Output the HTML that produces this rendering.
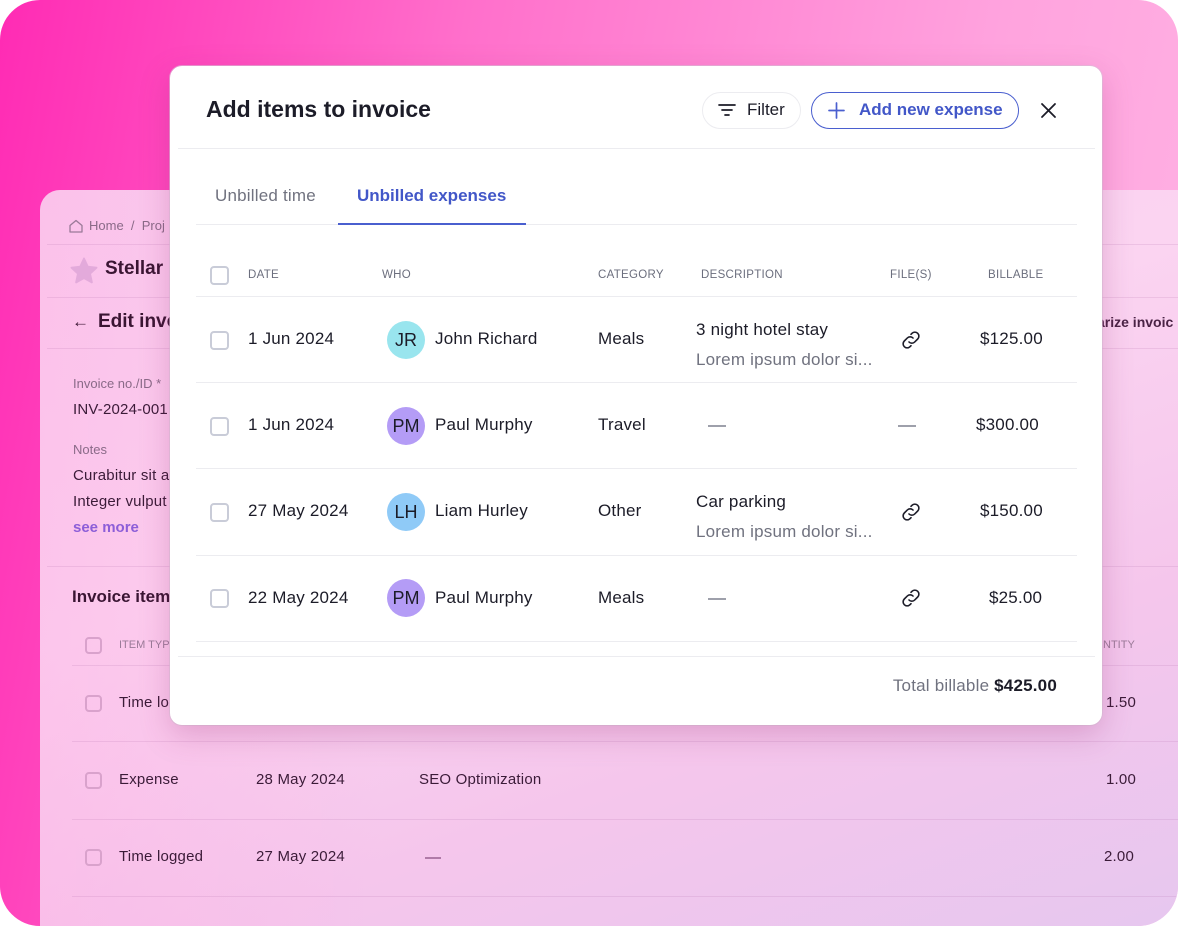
<!DOCTYPE html>
<html><head><meta charset="utf-8"><style>
*{box-sizing:border-box;margin:0;padding:0}
body{width:1178px;height:926px;background:#fff;font-family:"Liberation Sans",sans-serif;overflow:hidden;position:relative}
.frame{position:absolute;left:0;top:0;width:1178px;height:926px;border-radius:40px;overflow:hidden;background:linear-gradient(100deg,#ff2bb4 0%,#ff6fcb 35%,#ffa3de 75%,#ffb4e4 100%)}
.card{position:absolute;left:40px;top:190px;width:1140px;height:740px;border-radius:20px 0 0 0;background:linear-gradient(160deg,#f9cdef 0%,#fbd4f1 40%,#f5c6ec 70%,#e6c7ef 100%)}
.card2{position:absolute;inset:0;border-radius:20px 0 0 0;background:linear-gradient(90deg,rgba(255,170,225,.35),rgba(255,255,255,0) 30%)}
.t{position:absolute;white-space:nowrap;color:#3b1b38}
.hl{position:absolute;height:1px;background:rgba(180,110,170,.18)}
.cb{position:absolute;width:17px;height:17px;border:2px solid #d9a2cc;border-radius:4px}
.modal{position:absolute;left:170px;top:66px;width:932px;height:659px;background:#fff;border-radius:12px;box-shadow:0 10px 30px rgba(150,40,110,.25),0 0 0 1px rgba(220,200,220,.6)}
.m{position:absolute;white-space:nowrap;color:#1c1c28}
.ml{position:absolute;height:1px;background:#ececf0}
.mcb{position:absolute;width:19px;height:19px;border:2px solid #c9ccd8;border-radius:4px;left:40px}
.av{position:absolute;left:217px;width:38px;height:38px;border-radius:50%;font-size:18px;color:#1c1c28;display:flex;align-items:center;justify-content:center}
.hd{position:absolute;top:203px;font-size:11.5px;color:#6b6e7d;letter-spacing:.3px}
.gray{color:#70727f}
.dash{position:absolute;width:18px;height:1.5px;background:#9ea0ab}
.r{letter-spacing:.2px}
</style></head><body>
<div class="frame">
<div class="card"><div class="card2"></div></div>
<svg style="position:absolute;left:68px;top:218px" width="16" height="16" viewBox="0 0 16 16"><path d="M2 7.5L8 2.5l6 5V14H2z" fill="none" stroke="#9a7a98" stroke-width="1.3" stroke-linejoin="round"/></svg>
<div class="t" style="left:89px;top:218px;font-size:13px;color:#8a6a88">Home &nbsp;/ &nbsp;Proj</div>
<div class="hl" style="left:47px;top:244px;width:1131px"></div>
<svg style="position:absolute;left:68px;top:256px" width="32" height="30" viewBox="0 0 24 24"><path d="M12 2l3 6.5 7 .8-5.2 4.8 1.5 7L12 17.6 5.7 21.1l1.5-7L2 9.3l7-.8z" fill="#e3aadb" stroke="#e3aadb" stroke-linejoin="round" stroke-width="1.5"/></svg>
<div class="t" style="left:105px;top:258px;font-size:19px;font-weight:bold;color:#3a1533">Stellar</div>
<div class="hl" style="left:47px;top:297px;width:1131px"></div>
<div class="t" style="left:72px;top:312px;font-size:17px;color:#3a1533">←</div>
<div class="t" style="left:98px;top:311px;font-size:19px;font-weight:bold;color:#3a1533">Edit invo</div>
<div class="t" style="left:1097px;top:314px;font-size:14px;font-weight:bold;color:#4a2345">arize invoic</div>
<div class="hl" style="left:47px;top:348px;width:1131px"></div>
<div class="t" style="left:73px;top:376px;font-size:13px;color:#8a6a88">Invoice no./ID *</div>
<div class="t r" style="left:73px;top:401px;font-size:15px">INV-2024-001</div>
<div class="t" style="left:73px;top:442px;font-size:13px;color:#8a6a88">Notes</div>
<div class="t r" style="left:73px;top:467px;font-size:15px">Curabitur sit a</div>
<div class="t r" style="left:73px;top:493px;font-size:15px">Integer vulput</div>
<div class="t" style="left:73px;top:519px;font-size:15px;font-weight:bold;color:#8d5ed8">see more</div>
<div class="hl" style="left:47px;top:566px;width:1131px"></div>
<div class="t" style="left:72px;top:587px;font-size:17px;font-weight:bold;color:#3a1533">Invoice item</div>
<div class="cb" style="left:85px;top:637px"></div>
<div class="t" style="left:119px;top:639px;font-size:11px;color:#9a7a98">ITEM TYPE</div>
<div class="t" style="left:1103px;top:639px;font-size:11px;color:#9a7a98">NTITY</div>
<div class="hl" style="left:72px;top:665px;width:1106px"></div>
<div class="cb" style="left:85px;top:695px"></div>
<div class="t r" style="left:119px;top:694px;font-size:15px">Time lo</div>
<div class="t r" style="left:1106px;top:694px;font-size:15px">1.50</div>
<div class="hl" style="left:72px;top:741px;width:1106px"></div>
<div class="cb" style="left:85px;top:772px"></div>
<div class="t r" style="left:119px;top:771px;font-size:15px">Expense</div>
<div class="t r" style="left:256px;top:771px;font-size:15px">28 May 2024</div>
<div class="t r" style="left:419px;top:771px;font-size:15px">SEO Optimization</div>
<div class="t r" style="left:1106px;top:771px;font-size:15px">1.00</div>
<div class="hl" style="left:72px;top:819px;width:1106px"></div>
<div class="cb" style="left:85px;top:849px"></div>
<div class="t r" style="left:119px;top:848px;font-size:15px">Time logged</div>
<div class="t r" style="left:256px;top:848px;font-size:15px">27 May 2024</div>
<div style="position:absolute;left:425px;top:857px;width:16px;height:1.5px;background:#b07aa8"></div>
<div class="t r" style="left:1104px;top:848px;font-size:15px">2.00</div>
<div class="hl" style="left:72px;top:896px;width:1106px"></div>

<div class="modal">
<div class="m" style="left:36px;top:30px;font-size:23px;font-weight:bold">Add items to invoice</div>
<div style="position:absolute;left:532px;top:26px;width:99px;height:37px;border:1px solid #ececf0;border-radius:19px"></div>
<svg style="position:absolute;left:548px;top:36px" width="18" height="16" viewBox="0 0 18 16"><path d="M1 3h16M4 8h10M7 13h4" stroke="#1c1c28" stroke-width="1.7" stroke-linecap="round"/></svg>
<div class="m" style="left:577px;top:34px;font-size:17px">Filter</div>
<div style="position:absolute;left:641px;top:26px;width:208px;height:37px;border:1.5px solid #4a5fcf;border-radius:19px"></div>
<svg style="position:absolute;left:657px;top:35px" width="19" height="19" viewBox="0 0 19 19"><path d="M9.5 2v15M2 9.5h15" stroke="#4a5fcf" stroke-width="1.7" stroke-linecap="round"/></svg>
<div class="m" style="left:689px;top:34px;font-size:17px;font-weight:bold;color:#4257c8">Add new expense</div>
<svg style="position:absolute;left:870px;top:36px" width="17" height="17" viewBox="0 0 17 17"><path d="M2 2l13 13M15 2L2 15" stroke="#1c1c28" stroke-width="1.8" stroke-linecap="round"/></svg>
<div class="ml" style="left:8px;top:82px;width:917px"></div>
<div class="m gray r" style="left:45px;top:120px;font-size:17px">Unbilled time</div>
<div class="m" style="left:187px;top:120px;font-size:17px;font-weight:bold;color:#4257c8">Unbilled expenses</div>
<div class="ml" style="left:26px;top:158px;width:881px"></div>
<div style="position:absolute;left:168px;top:157px;width:188px;height:2px;background:#4a5fcf"></div>
<div class="mcb" style="top:200px"></div>
<div class="hd" style="left:78px">DATE</div>
<div class="hd" style="left:212px">WHO</div>
<div class="hd" style="left:428px">CATEGORY</div>
<div class="hd" style="left:531px">DESCRIPTION</div>
<div class="hd" style="left:720px">FILE(S)</div>
<div class="hd" style="left:818px">BILLABLE</div>
<div class="ml" style="left:26px;top:230px;width:881px"></div>

<div class="mcb" style="top:265px"></div>
<div class="m r" style="left:78px;top:263px;font-size:17px">1 Jun 2024</div>
<div class="av" style="top:255px;background:#99e5ee">JR</div>
<div class="m r" style="left:265px;top:263px;font-size:17px">John Richard</div>
<div class="m r" style="left:428px;top:263px;font-size:17px">Meals</div>
<div class="m r" style="left:526px;top:254px;font-size:17px">3 night hotel stay</div>
<div class="m gray r" style="left:526px;top:284px;font-size:17px">Lorem ipsum dolor si...</div>
<svg style="position:absolute;left:729px;top:262px" width="24" height="24" viewBox="0 0 24 24"><path d="M10 14a4 4 0 0 0 5.7 0l3-3a4 4 0 0 0-5.7-5.7l-1 1M14 10a4 4 0 0 0-5.7 0l-3 3a4 4 0 0 0 5.7 5.7l1-1" fill="none" stroke="#1c1c28" stroke-width="1.6" stroke-linecap="round"/></svg>
<div class="m r" style="left:810px;top:263px;font-size:17px">$125.00</div>
<div class="ml" style="left:26px;top:316px;width:881px"></div>

<div class="mcb" style="top:351px"></div>
<div class="m r" style="left:78px;top:349px;font-size:17px">1 Jun 2024</div>
<div class="av" style="top:341px;background:#b49cf6">PM</div>
<div class="m r" style="left:265px;top:349px;font-size:17px">Paul Murphy</div>
<div class="m r" style="left:428px;top:349px;font-size:17px">Travel</div>
<div class="dash" style="left:538px;top:359px"></div>
<div class="dash" style="left:728px;top:359px"></div>
<div class="m r" style="left:806px;top:349px;font-size:17px">$300.00</div>
<div class="ml" style="left:26px;top:402px;width:881px"></div>

<div class="mcb" style="top:437px"></div>
<div class="m r" style="left:78px;top:435px;font-size:17px">27 May 2024</div>
<div class="av" style="top:427px;background:#8fcaf7">LH</div>
<div class="m r" style="left:265px;top:435px;font-size:17px">Liam Hurley</div>
<div class="m r" style="left:428px;top:435px;font-size:17px">Other</div>
<div class="m r" style="left:526px;top:426px;font-size:17px">Car parking</div>
<div class="m gray r" style="left:526px;top:456px;font-size:17px">Lorem ipsum dolor si...</div>
<svg style="position:absolute;left:729px;top:434px" width="24" height="24" viewBox="0 0 24 24"><path d="M10 14a4 4 0 0 0 5.7 0l3-3a4 4 0 0 0-5.7-5.7l-1 1M14 10a4 4 0 0 0-5.7 0l-3 3a4 4 0 0 0 5.7 5.7l1-1" fill="none" stroke="#1c1c28" stroke-width="1.6" stroke-linecap="round"/></svg>
<div class="m r" style="left:810px;top:435px;font-size:17px">$150.00</div>
<div class="ml" style="left:26px;top:489px;width:881px"></div>

<div class="mcb" style="top:523px"></div>
<div class="m r" style="left:78px;top:522px;font-size:17px">22 May 2024</div>
<div class="av" style="top:513px;background:#b49cf6">PM</div>
<div class="m r" style="left:265px;top:522px;font-size:17px">Paul Murphy</div>
<div class="m r" style="left:428px;top:522px;font-size:17px">Meals</div>
<div class="dash" style="left:538px;top:532px"></div>
<svg style="position:absolute;left:729px;top:520px" width="24" height="24" viewBox="0 0 24 24"><path d="M10 14a4 4 0 0 0 5.7 0l3-3a4 4 0 0 0-5.7-5.7l-1 1M14 10a4 4 0 0 0-5.7 0l-3 3a4 4 0 0 0 5.7 5.7l1-1" fill="none" stroke="#1c1c28" stroke-width="1.6" stroke-linecap="round"/></svg>
<div class="m r" style="left:819px;top:522px;font-size:17px">$25.00</div>
<div class="ml" style="left:26px;top:575px;width:881px"></div>
<div class="ml" style="left:8px;top:590px;width:917px"></div>
<div class="m r" style="right:45px;top:610px;font-size:17px"><span class="gray">Total billable </span><b>$425.00</b></div>
</div>
</div>
</body></html>
